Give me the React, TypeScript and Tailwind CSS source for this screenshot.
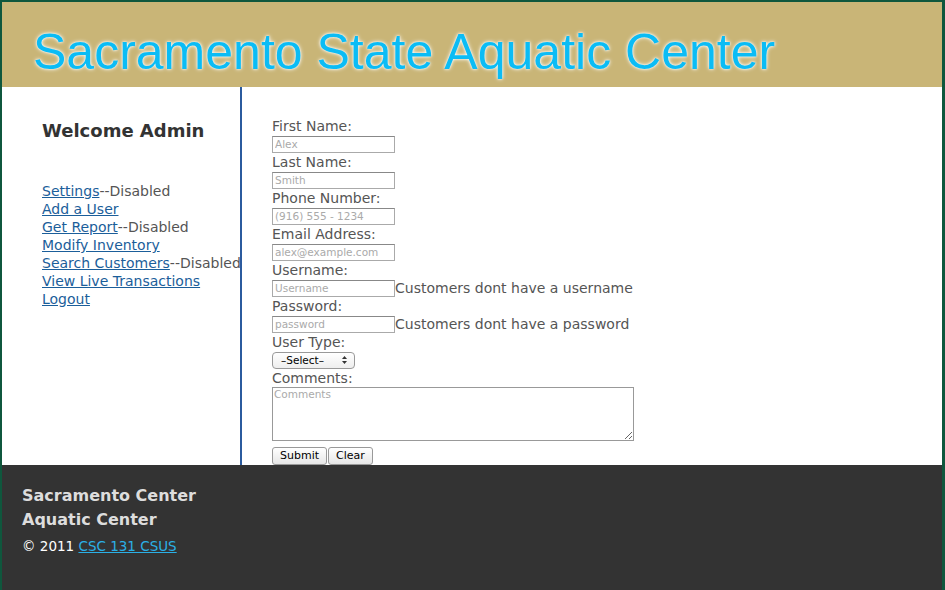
import React from 'react';

const navItems = [
  { label: 'Settings', disabled: true },
  { label: 'Add a User', disabled: false },
  { label: 'Get Report', disabled: true },
  { label: 'Modify Inventory', disabled: false },
  { label: 'Search Customers', disabled: true },
  { label: 'View Live Transactions', disabled: false },
  { label: 'Logout', disabled: false },
];

const fields = [
  { label: 'First Name:', placeholder: 'Alex' },
  { label: 'Last Name:', placeholder: 'Smith' },
  { label: 'Phone Number:', placeholder: '(916) 555 - 1234' },
  { label: 'Email Address:', placeholder: 'alex@example.com' },
  { label: 'Username:', placeholder: 'Username', note: 'Customers dont have a username' },
  { label: 'Password:', placeholder: 'password', note: 'Customers dont have a password' },
];

export default function App() {
  return (
    <div className="min-h-[590px] bg-[#0f573d] pt-[2px] pl-[2px] font-['DejaVu_Sans',sans-serif]">
      <div className="w-[940px] bg-white">
        {/* Header */}
        <div className="h-[85px] bg-[#c9b577] pl-[31px] pt-[23px]">
          <h1
            className="font-['Liberation_Sans',Arial,sans-serif] text-[50px] leading-[54px] text-[#0bbcf5]"
            style={{ textShadow: '0 0 4px #fff, 0 0 2px #fff' }}
          >
            Sacramento State Aquatic Center
          </h1>
        </div>

        <div className="flex">
          {/* Sidebar */}
          <div className="w-[240px] shrink-0 border-r-2 border-[#2b5b9e] pl-[40px] pt-[33px]">
            <h2 className="text-[18px] font-bold text-[#333] leading-[22px]">Welcome Admin</h2>
            <ul className="mt-[40px] text-[14px] leading-[18px] whitespace-nowrap">
              {navItems.map((item) => (
                <li key={item.label}>
                  <a href="#" className="text-[#1b5e9a] underline">{item.label}</a>
                  {item.disabled && <span className="text-[#555]">--Disabled</span>}
                </li>
              ))}
            </ul>
          </div>

          {/* Form */}
          <div className="pl-[30px] pt-[30px] text-[14px] leading-[18px] text-[#555]">
            {fields.map((f) => (
              <div key={f.label}>
                <div className="h-[18px]">{f.label}</div>
                <div className="flex h-[18px] items-center">
                  <input
                    placeholder={f.placeholder}
                    className="h-[17px] w-[123px] border border-[#aaa] border-t-[#888] bg-white px-[2px] text-[10.5px] placeholder:text-[#aaa] outline-none"
                  />
                  {f.note && <span>{f.note}</span>}
                </div>
              </div>
            ))}
            <div className="h-[18px]">User Type:</div>
            <div className="flex h-[18px] items-center">
              <div className="flex h-[17px] w-[83px] items-center justify-between rounded-[4px] border border-[#999] bg-gradient-to-b from-white to-[#eee] pl-[8px] pr-[7px] text-[10.5px] text-black">
                <span>–Select–</span>
                <svg width="5" height="8" viewBox="0 0 5 8">
                  <path d="M2.5 0 L5 3 L0 3 Z" fill="#333" />
                  <path d="M2.5 8 L5 5 L0 5 Z" fill="#333" />
                </svg>
              </div>
            </div>
            <div className="h-[18px]">Comments:</div>
            <textarea
              placeholder="Comments"
              className="block h-[54px] w-[362px] border border-[#999] px-[1px] text-[10.5px] leading-[12px] placeholder:text-[#aaa] outline-none"
            />
            <div className="mt-[6px] flex">
              <button className="h-[18px] rounded-[3px] border border-[#999] bg-gradient-to-b from-white to-[#e6e6e6] px-[7px] text-[11px] leading-[16px] text-black">
                Submit
              </button>
              <button className="ml-[1px] h-[18px] rounded-[3px] border border-[#999] bg-gradient-to-b from-white to-[#e6e6e6] px-[7px] text-[11px] leading-[16px] text-black">
                Clear
              </button>
            </div>
          </div>
        </div>

        {/* Footer */}
        <div className="h-[125px] bg-[#333] pl-[20px] pt-[19px]">
          <div className="text-[16px] font-bold leading-[24px] text-[#ddd]">Sacramento Center</div>
          <div className="text-[16px] font-bold leading-[24px] text-[#ddd]">Aquatic Center</div>
          <div className="mt-[5px] text-[13.5px] leading-[18px] text-white">
            © 2011 <a href="#" className="text-[#2bb0e6] underline">CSC 131 CSUS</a>
          </div>
        </div>
      </div>
    </div>
  );
}
